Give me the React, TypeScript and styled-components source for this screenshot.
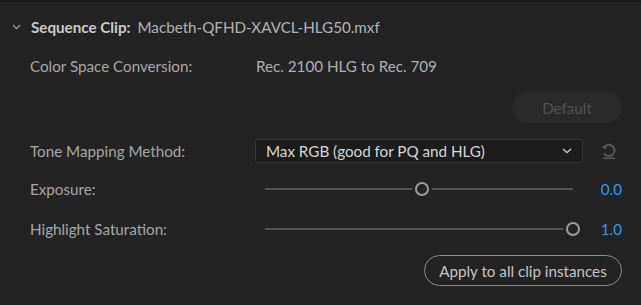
import styled, { createGlobalStyle } from "styled-components";

const GlobalStyle = createGlobalStyle`
  body {
    margin: 0;
    background: #232323;
    font-family: Lato, "Liberation Sans", sans-serif;
  }
`;

const Panel = styled.div`
  width: 641px;
  height: 305px;
  box-sizing: border-box;
  border-top: 2px solid #1a1a1a;
  padding: 12px 19px 0 30px;
  display: flex;
  flex-direction: column;
`;

const Header = styled.div`
  height: 26px;
  display: flex;
  align-items: center;
  margin-left: -18px;
  font-size: 15.2px;
  color: #b3b3b3;
`;

const Chevron = styled.svg`
  width: 9px;
  height: 6px;
  margin-right: 10px;
`;

const Title = styled.span`
  font-weight: 700;
  color: #cbcbcb;
  margin-right: 7px;
`;

const Row = styled.div<{ $mt: number }>`
  display: grid;
  grid-template-columns: 225px 328px 39px;
  align-items: center;
  height: 24px;
  margin-top: ${(p) => p.$mt}px;
`;

const Label = styled.div`
  font-size: 15.2px;
  color: #a8a8a8;
`;

const Value = styled.div`
  grid-column: 2 / 4;
  padding-left: 1px;
  font-size: 15.2px;
  color: #b1b1b1;
`;

const ButtonRow = styled.div<{ $mt: number }>`
  display: flex;
  justify-content: flex-end;
  margin-top: ${(p) => p.$mt}px;
`;

const PillButton = styled.button<{ $outlined?: boolean }>`
  height: 31px;
  border-radius: 16px;
  font-family: Lato, "Liberation Sans", sans-serif;
  font-size: 15.2px;
  box-sizing: border-box;
  padding: 0 10px;
  background: ${(p) => (p.$outlined ? "transparent" : "#2a2a2a")};
  border: ${(p) => (p.$outlined ? "1.5px solid #8c8c8c" : "none")};
  color: ${(p) => (p.$outlined ? "#c6c6c6" : "#525252")};
`;

const Select = styled.div`
  height: 24px;
  box-sizing: border-box;
  background: #1c1c1c;
  border: 1px solid #343434;
  border-radius: 2px;
  display: flex;
  align-items: center;
  justify-content: space-between;
  padding: 0 10px 0 10px;
  font-size: 15.2px;
  color: #d6d6d6;
`;

const IconCell = styled.div`
  display: flex;
  justify-content: flex-end;
  padding-right: 3px;
`;

const SliderBox = styled.div`
  position: relative;
  height: 24px;
  margin: 0 10px;
`;

const Track = styled.div`
  position: absolute;
  left: 0;
  right: 0;
  top: 11px;
  height: 2px;
  background: #545454;
`;

const Thumb = styled.div`
  position: absolute;
  top: 5px;
  width: 14px;
  height: 14px;
  margin-left: -7px;
  box-sizing: border-box;
  border-radius: 50%;
  border: 2.5px solid #9d9d9d;
  background: #232323;
  box-shadow: 0 0 0 3px #232323;
`;

const Number = styled.div`
  text-align: right;
  font-size: 15.2px;
  color: #2f9bf0;
`;

const Slider = ({ pct }: { pct: number }) => (
  <SliderBox>
    <Track />
    <Thumb style={{ left: `${pct}%` }} />
  </SliderBox>
);

export default function App() {
  return (
    <>
      <GlobalStyle />
      <Panel>
        <Header>
          <Chevron viewBox="0 0 9 6">
            <path d="M1 1 L4.5 4.6 L8 1" fill="none" stroke="#a0a0a0" strokeWidth="1.3" />
          </Chevron>
          <Title>Sequence Clip:</Title>
          Macbeth-QFHD-XAVCL-HLG50.mxf
        </Header>
        <Row $mt={14}>
          <Label>Color Space Conversion:</Label>
          <Value>Rec. 2100 HLG to Rec. 709</Value>
        </Row>
        <ButtonRow $mt={14}>
          <PillButton style={{ width: 110 }}>Default</PillButton>
        </ButtonRow>
        <Row $mt={16}>
          <Label>Tone Mapping Method:</Label>
          <Select>
            Max RGB (good for PQ and HLG)
            <svg width="10" height="6" viewBox="0 0 10 6">
              <path d="M1 1 L5 4.6 L9 1" fill="none" stroke="#c8c8c8" strokeWidth="1.4" />
            </svg>
          </Select>
          <IconCell>
            <svg width="20" height="18" viewBox="0 0 20 18">
              <path
                d="M6.2 4.2 A5.6 5.6 0 1 1 5 11.2"
                fill="none"
                stroke="#575757"
                strokeWidth="2"
              />
              <path d="M2.4 5.2 L7.4 2.2 L7.6 7.6 Z" fill="#575757" />
              <rect x="4" y="15.5" width="12" height="1.6" fill="#575757" />
            </svg>
          </IconCell>
        </Row>
        <Row $mt={14}>
          <Label>Exposure:</Label>
          <Slider pct={51} />
          <Number>0.0</Number>
        </Row>
        <Row $mt={16}>
          <Label>Highlight Saturation:</Label>
          <Slider pct={100} />
          <Number>1.0</Number>
        </Row>
        <ButtonRow $mt={14}>
          <PillButton $outlined style={{ width: 198 }}>
            Apply to all clip instances
          </PillButton>
        </ButtonRow>
      </Panel>
    </>
  );
}
